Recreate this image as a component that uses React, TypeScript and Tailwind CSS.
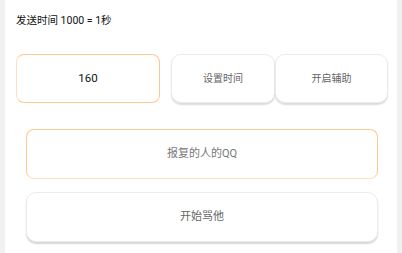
export default function App() {
  return (
    <div
      className="flex w-[402px] h-[253px] bg-white overflow-hidden"
      style={{ fontFamily: 'Roboto, "Noto Sans CJK SC", sans-serif' }}
    >
      <div className="w-[5px] shrink-0 bg-[#f1f1f1]" />
      <div className="flex-1 flex flex-col">
        <div className="pl-[11px] pt-[13px] h-[54px] text-[10.5px] leading-[16px] text-[#111]">
          发送时间 1000 = 1秒
        </div>

        <div className="flex h-[49px] pl-[11px] pr-[9px]">
          <div className="w-[144px] h-[49px] rounded-[8px] border border-[#ffc88f] border-l-[#ffe0c2] flex items-center justify-center text-[11.5px] text-[#111]">
            160
          </div>
          <button className="ml-[11px] w-[104px] h-[49px] rounded-[10px] border border-[#ececec] bg-white shadow-[0_1.5px_1.5px_rgba(0,0,0,0.14)] text-[10px] text-[#666]">
            设置时间
          </button>
          <button className="w-[113px] h-[49px] rounded-[10px] border border-[#ececec] bg-white shadow-[0_1.5px_1.5px_rgba(0,0,0,0.14)] text-[10px] text-[#666]">
            开启辅助
          </button>
        </div>

        <div className="mt-[26px] ml-[21px] mr-[19px] flex flex-col gap-[13px]">
          <div className="h-[50px] rounded-[8px] border border-[#ffc88f] border-b-[#ffe0c2] flex items-center justify-center text-[11px] text-[#777]">
            报复的人的QQ
          </div>
          <button className="h-[50px] rounded-[10px] border border-[#ececec] bg-white shadow-[0_2px_1.5px_rgba(0,0,0,0.16)] text-[11px] text-[#666]">
            开始骂他
          </button>
        </div>
      </div>
      <div className="w-[5px] shrink-0 bg-[#f1f1f1]" />
    </div>
  )
}
